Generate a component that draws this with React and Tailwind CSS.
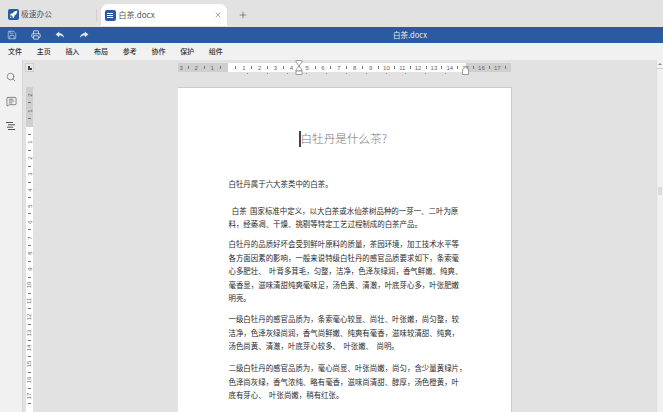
import { Search, MessageSquareText, X, Plus, Save, Printer } from "lucide-react";

const cjk = "font-['Noto_Sans_CJK_SC','Noto_Sans',sans-serif]";

const menus = ["文件", "主页", "插入", "布局", "参考", "协作", "保护", "组件"];

const paragraphs = [
    { gap: "mt-[30px]", lines: ["白牡丹属于六大茶类中的白茶。"] },
    {
        gap: "mt-[13px]",
        lines: [
            "  白茶  国家标准中定义，以大白茶或水仙茶树品种的一芽一、二叶为原",
            "料，经萎凋、干燥、挑剔等特定工艺过程制成的白茶产品。",
        ],
    },
    {
        gap: "mt-[6.5px]",
        lines: [
            "白牡丹的品质好坏会受到鲜叶原料的质量，茶园环境，加工技术水平等",
            "各方面因素的影响，一般来说特级白牡丹的感官品质要求如下，条索毫",
            "心多肥壮、  叶背多茸毛，匀整，洁净，色泽灰绿润，香气鲜嫩、纯爽、",
            "毫香显，滋味清甜纯爽毫味足，汤色黄、清澈，叶底芽心多，叶张肥嫩",
            "明亮。",
        ],
    },
    {
        gap: "mt-[7.5px]",
        lines: [
            "一级白牡丹的感官品质为，条索毫心较显、尚壮、叶张嫩，尚匀整，较",
            "洁净，色泽灰绿尚润，香气尚鲜嫩、纯爽有毫香，滋味较清甜、纯爽，",
            "汤色尚黄、清澈，叶底芽心较多、  叶张嫩、  尚明。",
        ],
    },
    {
        gap: "mt-[8.5px]",
        lines: [
            "二级白牡丹的感官品质为，毫心尚显、叶张尚嫩，尚匀，含少量黄绿片，",
            "色泽尚灰绿，香气浓纯、略有毫香，滋味尚清甜、醇厚，汤色橙黄，叶",
            "底有芽心、  叶张尚嫩，稍有红张。",
        ],
    },
];

// half-centimetre cells, numbered every second one
const hCells = [];
for (let n = 2.5; n > 0; n -= 0.5) hCells.push({ v: n, bg: "bg-[#cfcfcf]" });
hCells.push({ v: 0, bg: "bg-[linear-gradient(to_right,#cfcfcf_50%,#fff_50%)]" });
for (let n = 0.5; n <= 14.5; n += 0.5) hCells.push({ v: n, bg: "bg-white" });
hCells.push({ v: 15, bg: "bg-[linear-gradient(to_right,#fff_50%,#cfcfcf_50%)]" });
for (let n = 15.5; n <= 17.5; n += 0.5) hCells.push({ v: n, bg: "bg-[#cfcfcf]" });

const vCells = [];
for (let n = 2; n > 0; n -= 0.5) vCells.push({ v: n, bg: "bg-[#cfcfcf]" });
vCells.push({ v: 0, bg: "bg-[linear-gradient(to_bottom,#cfcfcf_50%,#fff_50%)]" });
for (let n = 0.5; n <= 17.5; n += 0.5) vCells.push({ v: n, bg: "bg-white" });

const tabStops = [0, 1, 2, 3, 4, 5, 6, 7, 8, 9, 10];

function RulerMark({ v, vertical }) {
    if (v === 0) return null;
    if (Number.isInteger(v)) {
        return (
            <span className={`text-[6px] leading-none text-[#666] font-['Liberation_Sans',sans-serif] ${vertical ? "-rotate-90" : ""}`}>
                {v}
            </span>
        );
    }
    return <span className={vertical ? "h-px w-[3px] bg-[#777]" : "h-[3px] w-px bg-[#777]"}></span>;
}

function HorizontalRuler() {
    return (
        <div className="relative flex h-[9px] w-[333px] bg-[#cfcfcf]">
            <div className="flex h-full w-[6.4px] shrink-0 items-center justify-center">
                <RulerMark v={3} />
            </div>
            {hCells.map((c, i) => (
                <div key={i} className={`flex h-full w-[7.925px] shrink-0 items-center justify-center overflow-hidden ${c.bg}`}>
                    <RulerMark v={c.v} />
                </div>
            ))}
            {/* indent markers */}
            <svg className="absolute left-[117px] top-[-3px]" width="8" height="15" viewBox="0 0 8 15" fill="#fff" stroke="#888" strokeWidth="0.8">
                <path d="M1 .5h6v1.5L4 6 1 2z" />
                <path d="M4 6l3 4v1H1v-1z" />
                <rect x="1" y="11" width="6" height="3.5" />
            </svg>
            <svg className="absolute left-[284px] top-[3px]" width="7" height="9" viewBox="0 0 7 9" fill="#fff" stroke="#888" strokeWidth="0.8">
                <path d="M3.5 .5L6.5 4v4.5h-6V4z" />
            </svg>
        </div>
    );
}

function App() {
    return (
        <div className={`flex h-[412px] w-[663px] flex-col overflow-hidden bg-[#e2e2e2] ${cjk}`}>
            {/* Tab bar */}
            <div className="flex h-[26px] shrink-0 items-end bg-[#e2e2e2]">
                <div className="flex h-[22px] w-[96px] items-center pb-[2px] pl-[8px]">
                    <span className="flex h-[11px] w-[11px] items-center justify-center rounded-[2px] bg-[#2a5ba0]">
                        <svg width="9" height="9" viewBox="0 0 10 10" fill="#fff">
                            <path d="M9.2.8C6.8.9 4.9 2 3.7 4L2 4.2.8 5.8l1.9.2L4 7.3l.2 1.9L5.8 8l.2-1.7C8 5.1 9.1 3.2 9.2.8z" />
                            <path d="M1.9 7L.9 9.1 3 8.1z" />
                        </svg>
                    </span>
                    <span className="ml-[2px] text-[7.75px] leading-none text-[#555]">极速办公</span>
                </div>
                <div className="mb-[5px] h-[12px] w-px bg-[#cfcfcf]"></div>
                <div className="ml-[3.5px] flex h-[22px] w-[126px] items-center rounded-t-[7px] bg-white pl-[4px] pr-[5px]">
                    <span className="flex h-[11px] w-[11px] flex-col items-center justify-center gap-px rounded-[2px] bg-[#2a5ba0]">
                        <span className="h-px w-[6px] bg-white"></span>
                        <span className="h-px w-[6px] bg-white"></span>
                        <span className="h-px w-[6px] bg-white"></span>
                    </span>
                    <span className="ml-[3px] text-[8px] leading-none text-[#555]">白茶.docx</span>
                    <X size={8} strokeWidth={1.5} className="ml-auto text-[#555]" />
                </div>
                <div className="flex h-[22px] w-[32px] items-center justify-center">
                    <Plus size={10} strokeWidth={1.5} className="text-[#555]" />
                </div>
            </div>

            {/* Quick access bar */}
            <div className="mt-px flex h-[16px] shrink-0 items-center bg-[#2a5ba0] pl-[7px] text-[#dfe6f1]">
                <div className="flex items-center gap-[14px]">
                    <Save size={10} strokeWidth={1.5} />
                    <Printer size={10} strokeWidth={2} />
                    <svg width="10" height="10" viewBox="0 0 10 10" fill="currentColor">
                        <path d="M4.2 1.6L.6 4.4l3.6 2.8V5.5c2 0 3.6.6 5 2.6-.4-2.9-2.2-4.8-5-5z" />
                    </svg>
                    <svg width="10" height="10" viewBox="0 0 10 10" fill="currentColor">
                        <path d="M5.8 1.6l3.6 2.8-3.6 2.8V5.5c-2 0-3.6.6-5 2.6.4-2.9 2.2-4.8 5-5z" />
                    </svg>
                </div>
                <span className="ml-[304px] text-[7.5px] leading-none text-[#e6ebf4]">白茶.docx</span>
            </div>

            {/* Menu bar */}
            <div className="flex h-[17px] shrink-0 items-center gap-[14.7px] bg-[#f1f1f1] pl-[8px]">
                {menus.map((m) => (
                    <span key={m} className="w-[14px] whitespace-nowrap text-[7px] font-medium leading-none text-[#333]">
                        {m}
                    </span>
                ))}
            </div>

            {/* Workspace */}
            <div className="flex min-h-0 flex-1">
                {/* Left tools */}
                <div className="flex w-[23px] shrink-0 flex-col items-center gap-[14px] border-r border-[#d8d8d8] bg-[#f1f1f1] pt-[12px] text-[#555]">
                    <Search size={10} strokeWidth={1.5} />
                    <MessageSquareText size={11} strokeWidth={1.5} />
                    <svg width="10" height="10" viewBox="0 0 10 10" stroke="currentColor" strokeWidth="1">
                        <path d="M0 1.5h7M2 3.8h7M1 6.2h6M2 8.5h7" />
                    </svg>
                </div>

                {/* Vertical ruler column */}
                <div className="flex w-[11px] shrink-0 flex-col items-center pl-[2px] pt-[3px]">
                    <div className="flex h-[9px] w-[9px] items-center justify-center border border-[#cfcfcf] bg-[#e8e8e8]">
                        <span className="h-[4px] w-[4px] border-b-2 border-l-2 border-[#444]"></span>
                    </div>
                    <div className="mt-[15px] flex w-[7px] flex-col">
                        <div className="h-[4px] w-full shrink-0 bg-[#cfcfcf]"></div>
                        {vCells.map((c, i) => (
                            <div key={i} className={`flex h-[7.925px] w-full shrink-0 items-center justify-center overflow-hidden ${c.bg}`}>
                                <RulerMark v={c.v} vertical />
                            </div>
                        ))}
                        <div className="h-[4px] w-full shrink-0 bg-white"></div>
                    </div>
                </div>

                {/* Document canvas */}
                <div className="min-w-0 flex-1 overflow-hidden pl-[144px] pt-[3px]">
                    <HorizontalRuler />
                    <div className="flex h-[2px] gap-[18.8px] pl-[69px] pt-px">
                        {tabStops.map((t) => (
                            <span key={t} className="h-px w-px shrink-0 bg-[#999]"></span>
                        ))}
                    </div>
                    <div className="mt-[13px] h-[400px] w-[334px] border-r border-t border-[#cccccc] bg-white px-[50.5px] pt-[43px]">
                        <div className="flex h-[16px] items-center pl-[70.5px]">
                            <span className="h-[16px] w-[1.5px] bg-[#444]"></span>
                            <span className="whitespace-nowrap text-[11.6px] font-light leading-none text-[#777]">白牡丹是什么茶?</span>
                        </div>
                        {paragraphs.map((p, i) => (
                            <div key={i} className={p.gap}>
                                {p.lines.map((line, j) => (
                                    <p key={j} className="h-[13.5px] whitespace-pre text-[7.45px] leading-[13.5px] text-[#2a2a2a]">
                                        {line}
                                    </p>
                                ))}
                            </div>
                        ))}
                    </div>
                </div>

                {/* Scrollbar */}
                <div className="flex w-[7px] shrink-0 flex-col border-l border-[#dcdcdc] bg-[#f1f1f1]">
                    <div className="flex h-[9px] items-center justify-center border-b border-[#d0d0d0] bg-[#f4f4f4]">
                        <span className="h-0 w-0 border-x-2 border-b-2 border-x-transparent border-b-[#888]"></span>
                    </div>
                    <div className="ml-[1px] mt-[118px] h-[8px] w-[4px] bg-[#dcdcdc]"></div>
                </div>
            </div>
        </div>
    );
}

export default App;
